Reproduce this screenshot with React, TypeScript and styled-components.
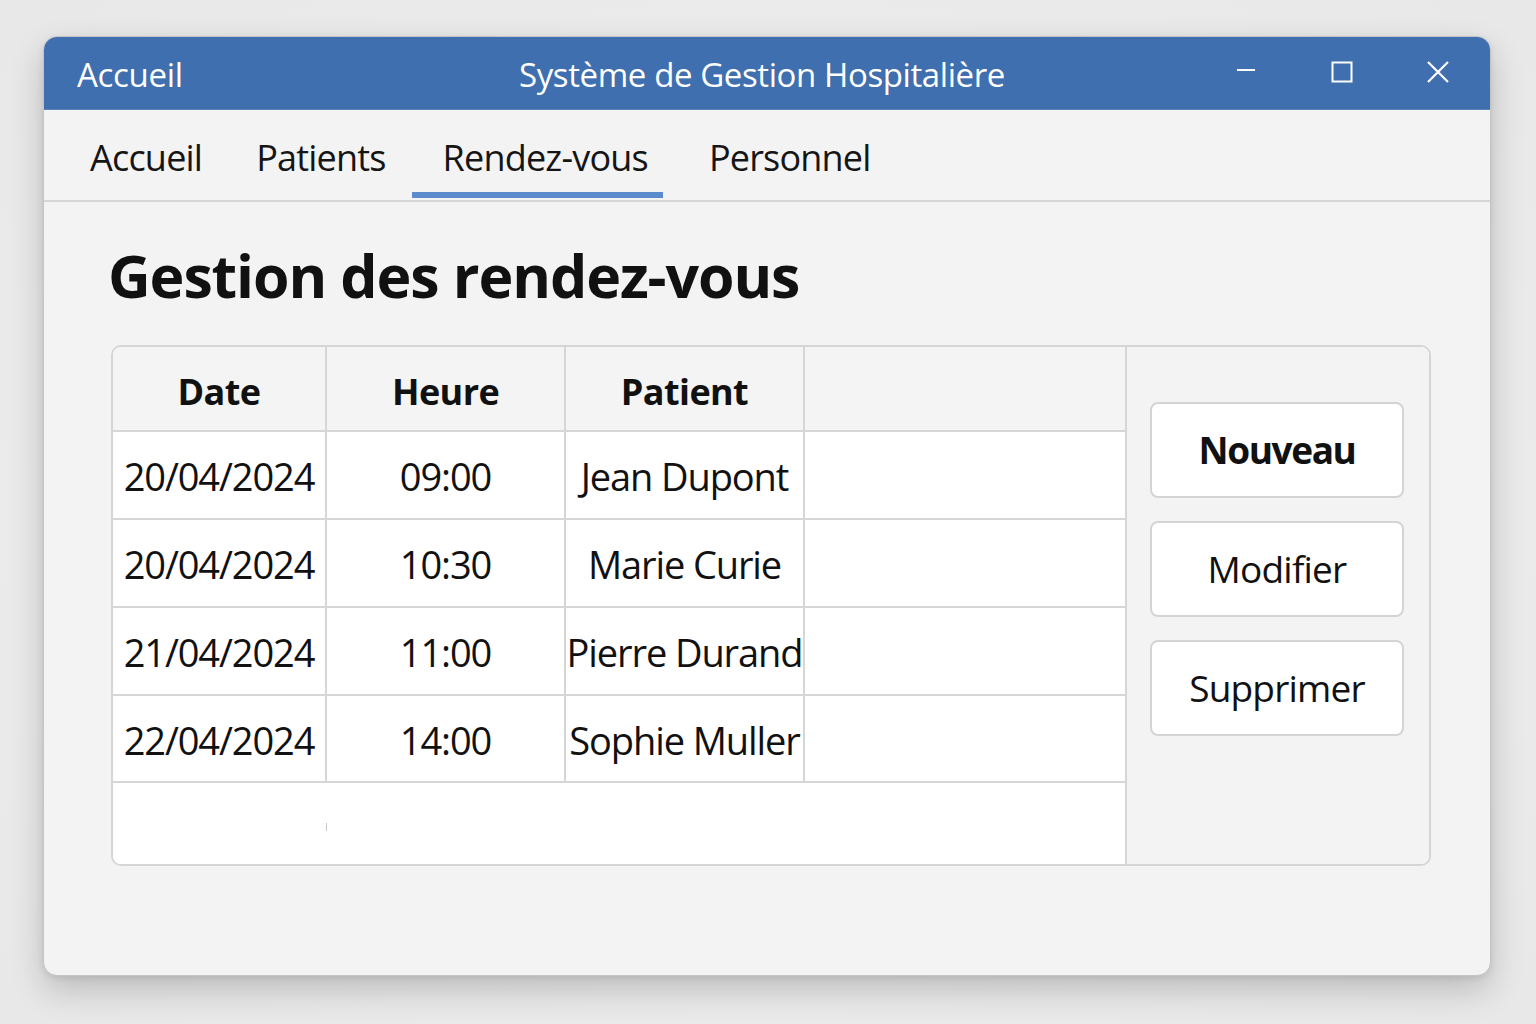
import React from "react";
import styled, { createGlobalStyle, css } from "styled-components";

const Global = createGlobalStyle`
  html, body { margin: 0; padding: 0; }
  body {
    background: #ebebeb;
    font-family: "Open Sans", "Noto Sans", "Liberation Sans", sans-serif;
    color: #111;
  }
`;

const Page = styled.div`
  width: 1536px;
  height: 1024px;
  box-sizing: border-box;
  padding: 36px 45px 0 43px;
  background: radial-gradient(ellipse at center, #f0f0f0 0%, #e8e8e8 100%);
`;

const Window = styled.div`
  width: 1448px;
  height: 940px;
  box-sizing: border-box;
  background: #f3f3f3;
  border: 1px solid #c4c4c4;
  border-radius: 14px;
  overflow: hidden;
  box-shadow: 0 14px 34px rgba(0, 0, 0, 0.2), 0 2px 6px rgba(0, 0, 0, 0.08);
  display: flex;
  flex-direction: column;
`;

const TitleBar = styled.div`
  height: 72px;
  flex: none;
  background: #3f6fae;
  color: #fff;
  display: grid;
  grid-template-columns: 1fr auto 1fr;
  align-items: center;
  border-bottom: 1px solid #5b83ba;
`;

const TitleLeft = styled.div`
  padding-left: 33px;
  padding-top: 2px;
  font-size: 33px;
  letter-spacing: -0.3px;
`;

const TitleCenter = styled.div`
  font-size: 33px;
  letter-spacing: -0.4px;
  padding-top: 2px;
  padding-right: 10px;
`;

const Controls = styled.div`
  justify-self: end;
  display: flex;
  padding-right: 4px;
  height: 100%;
`;

const ControlButton = styled.div`
  width: 96px;
  height: 100%;
  display: flex;
  align-items: center;
  justify-content: center;
  padding-bottom: 2px;
  box-sizing: border-box;
`;

const TabBar = styled.div`
  height: 92px;
  flex: none;
  box-sizing: border-box;
  border-bottom: 2px solid #d6d6d6;
  display: flex;
  align-items: stretch;
  padding-left: 46px;
`;

const Tab = styled.div<{ $active?: boolean; $pl: number; $pr: number }>`
  position: relative;
  display: flex;
  align-items: center;
  padding: 4px ${(p) => p.$pr}px 0 ${(p) => p.$pl}px;
  font-size: 36px;
  letter-spacing: -0.8px;
  color: #151515;
  ${(p) =>
    p.$active &&
    css`
      &::after {
        content: "";
        position: absolute;
        left: 0;
        right: 0;
        bottom: 2px;
        height: 6px;
        background: #5b8bcd;
      }
    `}
`;

const Content = styled.div`
  flex: 1;
  padding: 20px 59px 0 67px;
  display: flex;
  flex-direction: column;
`;

const Heading = styled.h1`
  margin: 0 0 17px -3px;
  height: 106px;
  display: flex;
  align-items: center;
  font-size: 59px;
  font-weight: 700;
  letter-spacing: -1.1px;
  color: #111;
`;

const Panel = styled.div`
  height: 521px;
  box-sizing: border-box;
  border: 2px solid #d5d5d5;
  border-radius: 10px;
  overflow: hidden;
  display: flex;
  background: #fff;
`;

const Table = styled.div`
  flex: 1;
  display: grid;
  grid-template-columns: 214px 239px 239px 1fr;
  grid-template-rows: 85px 88px 88px 88px 87px 1fr;
`;

const Cell = styled.div<{ $head?: boolean; $noRight?: boolean }>`
  display: flex;
  align-items: center;
  justify-content: center;
  box-sizing: border-box;
  white-space: nowrap;
  border-right: ${(p) => (p.$noRight ? "none" : "2px solid #d6d6d6")};
  border-bottom: 2px solid #d6d6d6;
  background: ${(p) => (p.$head ? "#f4f4f4" : "#fff")};
  font-size: ${(p) => (p.$head ? "36px" : "38px")};
  font-weight: ${(p) => (p.$head ? 700 : 400)};
  letter-spacing: ${(p) => (p.$head ? "-0.6px" : "-1.1px")};
  color: #111;
  padding-top: ${(p) => (p.$head ? "6px" : "2px")};
`;

const EmptyRow = styled.div`
  grid-column: 1 / -1;
  background: #fff;
  display: flex;
  padding: 40px 0 0 213px;
`;

const Tick = styled.span`
  width: 1px;
  height: 8px;
  background: #c8c8c8;
`;

const SidePanel = styled.div`
  width: 304px;
  flex: none;
  box-sizing: border-box;
  border-left: 2px solid #d6d6d6;
  background: #f3f3f3;
  padding: 55px 0 0 23px;
  display: flex;
  flex-direction: column;
  gap: 23px;
`;

const ActionButton = styled.div<{ $bold?: boolean }>`
  width: 254px;
  height: 96px;
  box-sizing: border-box;
  background: #fff;
  border: 2px solid #d4d4d4;
  border-radius: 8px;
  display: flex;
  align-items: center;
  justify-content: center;
  font-size: 37px;
  font-weight: ${(p) => (p.$bold ? 700 : 400)};
  letter-spacing: ${(p) => (p.$bold ? "-1.4px" : "-0.8px")};
  color: #111;
  padding-bottom: 2px;
`;

const rows = [
  ["20/04/2024", "09:00", "Jean Dupont"],
  ["20/04/2024", "10:30", "Marie Curie"],
  ["21/04/2024", "11:00", "Pierre Durand"],
  ["22/04/2024", "14:00", "Sophie Muller"],
];

export default function App() {
  return (
    <>
      <Global />
      <Page>
        <Window>
          <TitleBar>
            <TitleLeft>Accueil</TitleLeft>
            <TitleCenter>Système de Gestion Hospitalière</TitleCenter>
            <Controls>
              <ControlButton>
                <svg width="20" height="20" viewBox="0 0 20 20">
                  <line x1="1" y1="8" x2="19" y2="8" stroke="#fff" strokeWidth="2" />
                </svg>
              </ControlButton>
              <ControlButton>
                <svg width="22" height="22" viewBox="0 0 22 22">
                  <rect x="1.5" y="1.5" width="19" height="19" fill="none" stroke="#fff" strokeWidth="2" />
                </svg>
              </ControlButton>
              <ControlButton>
                <svg width="24" height="24" viewBox="0 0 24 24">
                  <path d="M2 2 L22 22 M22 2 L2 22" stroke="#fff" strokeWidth="2.2" />
                </svg>
              </ControlButton>
            </Controls>
          </TitleBar>
          <TabBar>
            <Tab $pl={0} $pr={54}>Accueil</Tab>
            <Tab $pl={0} $pr={26}>Patients</Tab>
            <Tab $active $pl={31} $pr={15}>Rendez-vous</Tab>
            <Tab $pl={46} $pr={0}>Personnel</Tab>
          </TabBar>
          <Content>
            <Heading>Gestion des rendez-vous</Heading>
            <Panel>
              <Table>
                <Cell $head>Date</Cell>
                <Cell $head>Heure</Cell>
                <Cell $head>Patient</Cell>
                <Cell $head $noRight />
                {rows.map((r, i) => (
                  <React.Fragment key={i}>
                    <Cell>{r[0]}</Cell>
                    <Cell>{r[1]}</Cell>
                    <Cell>{r[2]}</Cell>
                    <Cell $noRight />
                  </React.Fragment>
                ))}
                <EmptyRow>
                  <Tick />
                </EmptyRow>
              </Table>
              <SidePanel>
                <ActionButton $bold>Nouveau</ActionButton>
                <ActionButton>Modifier</ActionButton>
                <ActionButton>Supprimer</ActionButton>
              </SidePanel>
            </Panel>
          </Content>
        </Window>
      </Page>
    </>
  );
}
